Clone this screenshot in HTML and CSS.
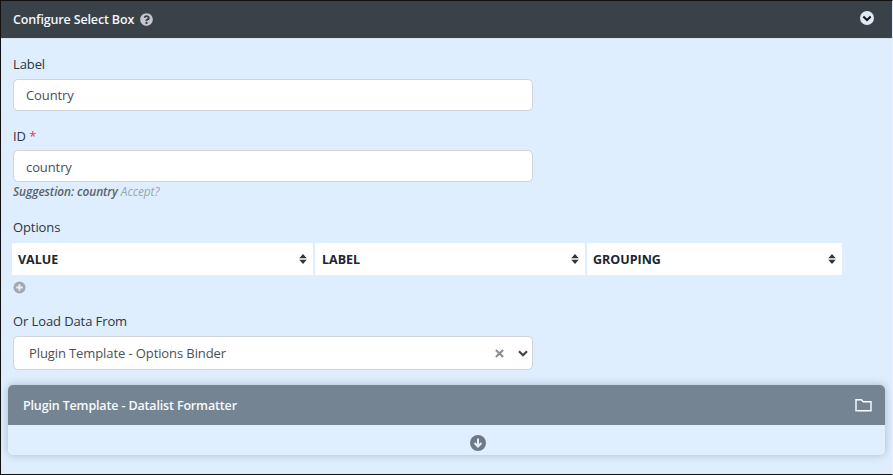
FILE: index.html
```html
<!DOCTYPE html>
<html lang="en">
<head>
<meta charset="utf-8">
<title>Configure Select Box</title>
<link rel="stylesheet" href="styles.css">
</head>
<body>
<div class="frame">
  <header class="top">
    <h1 class="top-title">Configure Select Box</h1>
    <svg class="help" viewBox="0 0 512 512"><path fill="#c4c8cc" d="M504 256c0 137-111 248-248 248S8 393 8 256 119 8 256 8s248 111 248 248zM263 90c-54 0-89 23-116 63-4 5-2 12 3 16l35 26c5 4 13 3 17-2 18-23 30-36 58-36 21 0 47 13 47 34 0 15-13 23-34 35-24 14-56 31-56 74v7c0 7 5 12 12 12h56c7 0 12-5 12-12v-4c0-30 86-31 86-111 0-60-62-102-120-102zm-7 254c-25 0-46 21-46 46s21 46 46 46 46-21 46-46-21-46-46-46z"/></svg>
    <svg class="collapse" viewBox="0 0 16 16"><circle cx="8" cy="8" r="8" fill="#dde9f5"/><path d="M3.8 6.2 8 10.200l4.200-4" fill="none" stroke="#14181c" stroke-width="2.4"/></svg>
  </header>
  <main class="body">
    <div class="field field-label">
      <label class="lbl">Label</label>
      <div class="input">Country</div>
    </div>
    <div class="field field-id">
      <label class="lbl">ID <span class="req">*</span></label>
      <div class="input input-id">country</div>
      <p class="hint"><b class="hint-strong">Suggestion: country</b> <span class="accept">Accept?</span></p>
    </div>
    <div class="field field-options">
      <label class="lbl">Options</label>
      <div class="table">
        <div class="th th-a"><span>VALUE</span><svg class="sort" viewBox="0 0 9 12"><path d="M4.5 0 9 5H0zM0 7h9l-4.500 5z"/></svg></div>
        <div class="th th-b"><span>LABEL</span><svg class="sort" viewBox="0 0 9 12"><path d="M4.5 0 9 5H0zM0 7h9l-4.500 5z"/></svg></div>
        <div class="th th-c"><span>GROUPING</span><svg class="sort" viewBox="0 0 9 12"><path d="M4.5 0 9 5H0zM0 7h9l-4.500 5z"/></svg></div>
      </div>
      <svg class="add" viewBox="0 0 14 14"><circle cx="7" cy="7" r="6.500" fill="#a2a9b0"/><path d="M7 3.500v7M3.500 7h7" stroke="#e6f0fb" stroke-width="2"/></svg>
    </div>
    <div class="field field-load">
      <label class="lbl">Or Load Data From</label>
      <div class="select">
        <span class="select-text">Plugin Template - Options Binder</span>
        <svg class="clear" viewBox="0 0 10 10"><path d="M1 1l8 8M9 1l-8 8" stroke="#8b8f94" stroke-width="2.400"/></svg>
        <svg class="chev" viewBox="0 0 10 7"><path d="M1 1.300l4 4 4-4" fill="none" stroke="#3d4650" stroke-width="2.200"/></svg>
      </div>
    </div>
    <section class="panel">
      <div class="panel-head">
        <span class="panel-title">Plugin Template - Datalist Formatter</span>
        <svg class="folder" viewBox="0 0 17 14"><path d="M1 1.800h5.300l2 2H16v9H1z" fill="none" stroke="#fff" stroke-width="1.400"/></svg>
      </div>
      <div class="panel-foot">
        <svg class="down" viewBox="0 0 16 16"><circle cx="8" cy="8" r="8" fill="#6d7a86"/><path d="M8 3.500v8M4.500 8 8 11.500 11.500 8" fill="none" stroke="#e4effb" stroke-width="2"/></svg>
      </div>
    </section>
  </main>
</div>
</body>
</html>
```
FILE: styles.css
```css
* { box-sizing: border-box; }
html, body { margin: 0; padding: 0; }
body {
  width: 893px;
  height: 475px;
  overflow: hidden;
  font-family: "Open Sans", "Noto Sans", sans-serif;
  font-size: 13px;
  letter-spacing: -0.1px;
  color: #343a40;
  background: #deeeff;
}
.frame {
  width: 893px;
  height: 475px;
  border: 1px solid #111;
  border-right-color: #e8f2fc;
  display: flex;
  flex-direction: column;
  background: #deeeff;
}
.top {
  height: 38px;
  flex: none;
  background: #3a4249;
  border-bottom: 1px solid #d8e2ec;
  display: flex;
  align-items: center;
  padding: 0 18px 0 12px;
}
.top-title {
  margin: 0;
  font-size: 12.5px;
  font-weight: 600;
  letter-spacing: -0.15px;
  color: #f4f7fa;
}
.help { width: 13px; height: 13px; margin-left: 6px; }
.collapse { width: 14px; height: 14px; margin: 0 0 3px auto; }
.body {
  flex: 1;
  display: flex;
  flex-direction: column;
  padding: 0 0 0 7px;
}
.field { padding-left: 5px; }
.lbl { display: block; line-height: 18px; color: #2f363c; }
.field-label { padding-top: 16px; }
.field-label .lbl { margin-bottom: 6px; }
.field-id { padding-top: 16px; }
.field-id .lbl { margin-bottom: 5px; }
.req { color: #e8374f; }
.input {
  width: 520px;
  height: 32px;
  background: #fff;
  border: 1px solid #ced4da;
  border-radius: 5px;
  padding: 0 12px;
  line-height: 30px;
  color: #495057;
}
.input-id { line-height: 32px; }
.hint {
  margin: 2px 0 0;
  font-size: 11.9px;
  line-height: 15px;
  font-style: italic;
  color: #5b6268;
}
.hint-strong { font-weight: 600; }
.accept { color: #9ea6ae; }
.field-options { padding-top: 19px; padding-left: 4px; }
.field-options .lbl { padding-left: 1px; margin-bottom: 7px; }
.table { display: flex; gap: 2px; width: 830px; height: 32px; }
.th {
  background: #fff;
  display: flex;
  align-items: center;
  justify-content: space-between;
  padding: 0 6px 0 6px;
  font-weight: 700;
  font-size: 12.5px;
  letter-spacing: 0;
  color: #212529;
}
.th-a { width: 301px; }
.th-b { width: 270px; padding-left: 7px; }
.th-c { width: 255px; }
.sort { width: 8px; height: 10px; fill: #2f363c; }
.add { display: block; width: 13px; height: 13px; margin: 6px 0 0 1px; }
.field-load { padding-top: 18px; }
.field-load .lbl { margin-bottom: 6px; }
.select {
  width: 520px;
  height: 34px;
  background: #fff;
  border: 1px solid #ced4da;
  border-radius: 5px;
  display: flex;
  align-items: center;
  padding: 0 4px 0 15px;
  color: #495057;
}
.select-text { flex: 1; }
.clear { width: 9px; height: 9px; margin-right: 14px; }
.chev { width: 10px; height: 7px; }
.panel {
  margin-top: 15px;
  width: 877px;
  height: 70px;
  border-radius: 5px;
  background: #e0efff;
  box-shadow: 0 0 8px rgba(70, 90, 110, .35);
  overflow: hidden;
  flex: none;
}
.panel-head {
  height: 40px;
  background: #748492;
  display: flex;
  align-items: center;
  justify-content: space-between;
  padding: 0 13px 0 15px;
}
.panel-title {
  color: #f8fafc;
  font-weight: 600;
  font-size: 12.5px;
  letter-spacing: -0.15px;
}
.folder { width: 17px; height: 14px; }
.panel-foot {
  height: 30px;
  display: flex;
  align-items: center;
  justify-content: center;
  padding-top: 6px;
}
.down { width: 16px; height: 16px; margin-left: 62px; }
```
